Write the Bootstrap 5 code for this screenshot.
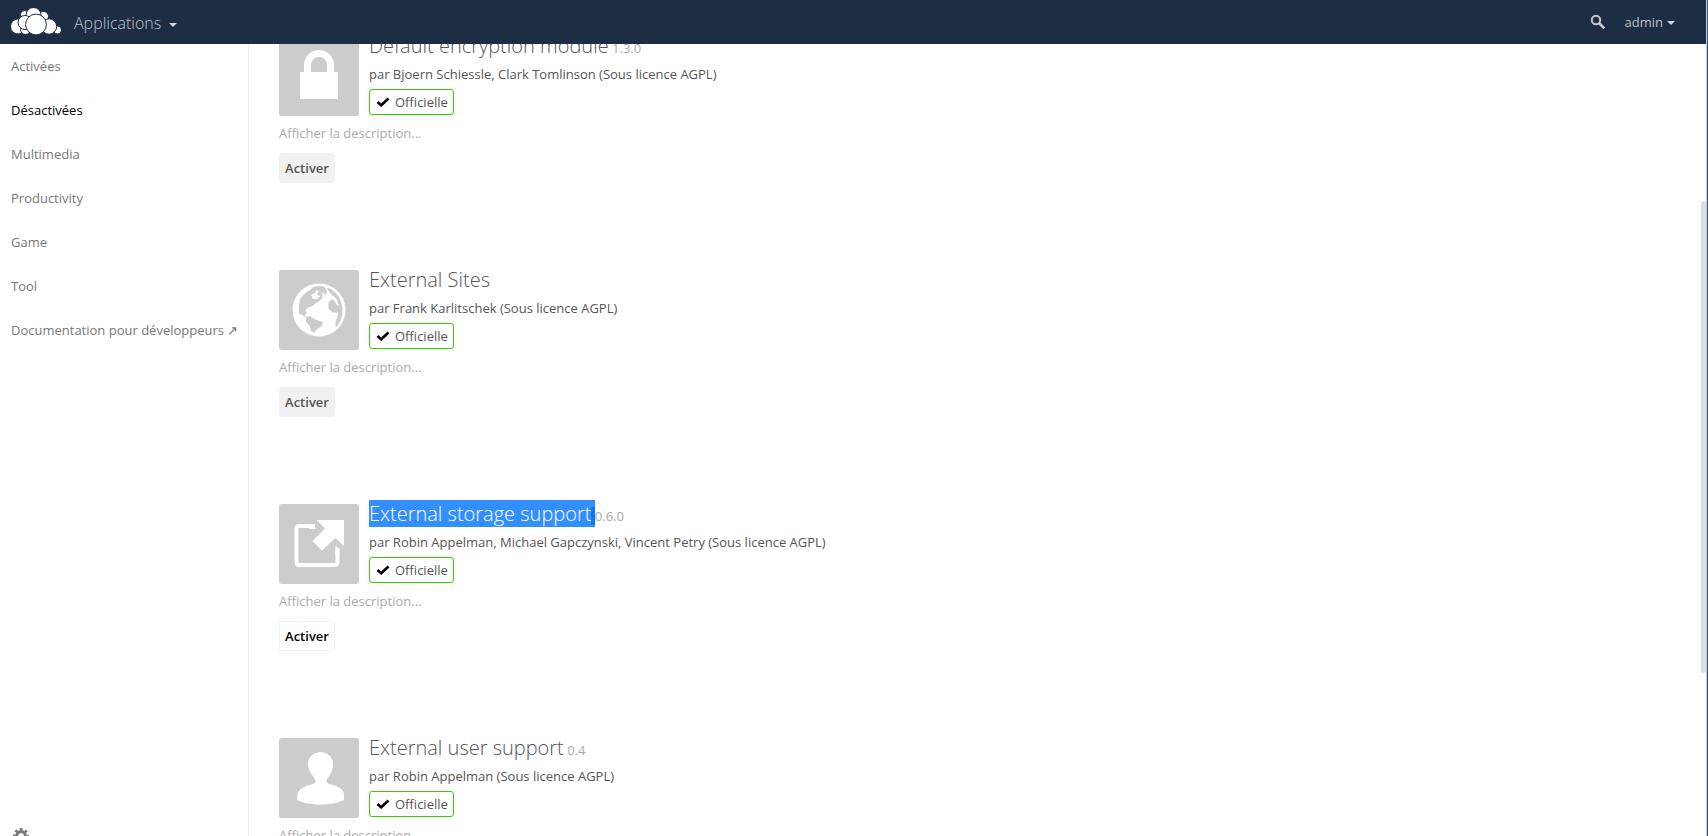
<!DOCTYPE html>
<html lang="fr">
<head>
<meta charset="utf-8">
<meta name="viewport" content="width=device-width, initial-scale=1">
<title>Applications - ownCloud</title>
<link href="https://cdn.jsdelivr.net/npm/bootstrap@5.3.0/dist/css/bootstrap.min.css" rel="stylesheet">
<style>
body { font-family: "Open Sans", sans-serif; font-size: 13px; line-height: 20px; color: #555; background: #fff; }
a { text-decoration: none; }
.topbar { height: 44px; background: #1d2d44; z-index: 10; padding: 0 33px 0 11px; }
.topbar .btn { border: 0; padding: 0; color: #bbc0c7; line-height: 20px; }
.topbar .app-menu { font-size: 16px; font-weight: 300; margin: 2px 0 0 13px; }
.topbar .user-menu { font-size: 13px; }
.topbar .dropdown-toggle::after { border-width: 4px 4px 0; margin-left: 4px; vertical-align: 2px; color: #d2d5da; }
.topbar .app-menu::after { margin-left: 8px; }
.sidebar { width: 249px; border-right: 1px solid #eee; }
.sidebar .nav-link { padding: 11px; height: 44px; line-height: 22px; color: #777; white-space: nowrap; }
.sidebar .nav-link.active { color: #000; }
.settings-btn { padding: 0 0 0 13px; margin-bottom: -8px; line-height: 1; }
.app-list { margin-top: -12px; padding-left: 30px; }
.app-entry { height: 234px; }
.app-head { gap: 10px; }
.app-icon { width: 80px; height: 80px; background: #ccc; border-radius: 3px; margin-top: 4px; }
.app-title { height: 27px; line-height: 27px; white-space: nowrap; }
.app-name { font-size: 20px; line-height: 27px; font-weight: 300; color: #555; margin: 0; }
.app-version { color: #aaa; }
.app-name.picked { background: #338fff; color: #fff; }
.picked-gap { font-size: 13px; font-weight: 400; background: #0a78ff; }
.author { margin: 5px 0; }
.official { height: 26px; width: 85px; border: 1px solid #37ce02; border-radius: 3px; padding-left: 6px; gap: 5px; }
.more { display: block; width: max-content; color: #aaa; margin: 7px 0 10px; }
.enable-btn { height: 30px; width: 56px; padding: 0; font-size: 13px; line-height: 20px; font-weight: 600; color: #555; background: #f1f1f1; border: 1px solid #f1f1f1; border-radius: 3px; }
.enable-btn.hovered { background: #fff; color: #000; }
.scroll-thumb { right: 2px; top: 24%; height: 56.5%; width: 5px; background: #ddd; border-radius: 2px; }
.edge { right: 0; width: 2px; background: #31558e; border-left: 1px solid #c8ccd2; z-index: 20; }
</style>
</head>
<body>
<svg class="d-none">
  <symbol id="check" viewBox="0 0 14 10"><path d="M1.500 5l3.700 3.300L12.500 1.500" fill="none" stroke="#000" stroke-width="2.600"/></symbol>
</svg>
<div class="vh-100 d-flex flex-column overflow-hidden position-relative">
  <header class="topbar d-flex align-items-center flex-shrink-0">
    <a href="#" aria-label="ownCloud" class="d-flex">
      <svg width="50" height="28" viewBox="0 0 50 28" fill="#fff" stroke="#1d2d44" stroke-width="1">
        <circle cx="13.500" cy="6.500" r="4"/><circle cx="32.500" cy="8.500" r="5"/>
        <circle cx="46.500" cy="22" r="4"/><circle cx="7" cy="18.500" r="7.500"/><circle cx="14.500" cy="21.500" r="5"/>
        <circle cx="22.500" cy="7" r="7.500"/><circle cx="14" cy="14.500" r="7"/>
        <circle cx="38" cy="18.500" r="7.700"/><circle cx="25" cy="16.500" r="10.400"/>
      </svg>
    </a>
    <button type="button" class="btn app-menu dropdown-toggle">Applications</button>
    <div class="ms-auto d-flex align-items-center">
      <button type="button" class="btn d-flex me-3 pe-1" aria-label="Rechercher">
        <svg width="16" height="16" viewBox="0 0 16 16" fill="none" stroke="#c5c9cf"><circle cx="7" cy="6" r="4.200" stroke-width="2"/><path d="M10 9l5.300 5.300" stroke-width="2.600"/></svg>
      </button>
      <button type="button" class="btn user-menu dropdown-toggle">admin</button>
    </div>
  </header>
  <div class="d-flex flex-grow-1 overflow-hidden">
    <aside class="sidebar d-flex flex-column flex-shrink-0">
      <nav class="nav flex-column flex-nowrap">
        <a class="nav-link" href="#">Activées</a>
        <a class="nav-link active" href="#">Désactivées</a>
        <a class="nav-link" href="#">Multimedia</a>
        <a class="nav-link" href="#">Productivity</a>
        <a class="nav-link" href="#">Game</a>
        <a class="nav-link" href="#">Tool</a>
        <a class="nav-link" href="#">Documentation pour développeurs ↗</a>
      </nav>
      <button type="button" class="btn border-0 settings-btn mt-auto text-start" aria-label="Paramètres">
        <svg class="d-block" width="16" height="16" viewBox="0 0 16 16"><circle cx="8" cy="8" r="4.400" fill="none" stroke="#777" stroke-width="3"/><circle cx="8" cy="8" r="6.800" fill="none" stroke="#777" stroke-width="2.400" stroke-dasharray="2.670 2.670" stroke-dashoffset="1.330"/></svg>
      </button>
    </aside>
    <main class="flex-grow-1 overflow-hidden">
      <div class="app-list">
        <article class="app-entry">
          <div class="app-head d-flex">
            <div class="app-icon flex-shrink-0"><svg width="80" height="80" viewBox="0 0 80 80"><path d="M21 36h38v27H21z" fill="#fff"/><path d="M28.500 37v-8a11.500 11.500 0 0 1 23 0v8" fill="none" stroke="#fff" stroke-width="7"/></svg></div>
            <div>
              <div class="app-title"><h2 class="app-name d-inline">Default encryption module</h2> <span class="app-version">1.3.0</span></div>
              <div class="author">par Bjoern Schiessle, Clark Tomlinson (Sous licence AGPL)</div>
              <div class="official d-flex align-items-center"><svg width="14" height="10"><use href="#check"/></svg>Officielle</div>
            </div>
          </div>
          <a href="#" class="more">Afficher la description...</a>
          <button type="button" class="btn enable-btn">Activer</button>
        </article>
        <article class="app-entry">
          <div class="app-head d-flex">
            <div class="app-icon flex-shrink-0"><svg width="80" height="80" viewBox="0 0 80 80"><circle cx="40" cy="40" r="26.500" fill="#fff"/><g fill="#ccc"><path d="M21 29c3-4 6-7 11-9.500l1-2c4-1.500 8-2 12-1l3 4-1 5-3 0-1 3-3 3-4 2-3 3-4 1-3 3 2 2-2 2 1 3-3-2-4-2c0-5 0-9 1-14.500z"/><path d="M27 47l4-1 5 3.500 8 2.500-1 4-4 2.500-4 4-3-1-1-5-4-5z"/><path d="M48 17.500c6 2 10.500 6 12.500 11 3 6 4 12 2 19-1 4-3 8-6 10l0-6 2-5 1-4-6 0-4-4 0-6 3-3 3 0-3-5-4-5z"/></g><path d="M32 25l4-2 1-3 3 1-2 4 4 1-4 3-4 0zM43 22l4 3-1 2-3-1zM54 25l4 5 2 6-2-1-4-6z" fill="#fff"/></svg></div>
            <div>
              <div class="app-title"><h2 class="app-name d-inline">External Sites</h2></div>
              <div class="author">par Frank Karlitschek (Sous licence AGPL)</div>
              <div class="official d-flex align-items-center"><svg width="14" height="10"><use href="#check"/></svg>Officielle</div>
            </div>
          </div>
          <a href="#" class="more">Afficher la description...</a>
          <button type="button" class="btn enable-btn">Activer</button>
        </article>
        <article class="app-entry">
          <div class="app-head d-flex">
            <div class="app-icon flex-shrink-0"><svg width="80" height="80" viewBox="0 0 80 80"><path d="M36 22H20.500Q17.500 22 17.500 25v33q0 3 3 3h35q3 0 3-3V44" fill="none" stroke="#fff" stroke-width="4"/><path d="M32 20l5.500 5H30zM56.500 41.500l4 4v5h-4z" fill="#fff"/><path d="M37.500 16H65v26l-8.500-8L43 46.500 33.500 37 46 24.500z" fill="#fff"/></svg></div>
            <div>
              <div class="app-title"><h2 class="app-name d-inline picked">External storage support<span class="picked-gap"> </span></h2><span class="app-version">0.6.0</span></div>
              <div class="author">par Robin Appelman, Michael Gapczynski, Vincent Petry (Sous licence AGPL)</div>
              <div class="official d-flex align-items-center"><svg width="14" height="10"><use href="#check"/></svg>Officielle</div>
            </div>
          </div>
          <a href="#" class="more">Afficher la description...</a>
          <button type="button" class="btn enable-btn hovered">Activer</button>
        </article>
        <article class="app-entry">
          <div class="app-head d-flex">
            <div class="app-icon flex-shrink-0"><svg width="80" height="80" viewBox="0 0 80 80"><path d="M41.500 14c7 0 12.500 5 12.500 12 0 6-2 10-5 13.500-2 2.500-2 5 0 6 8 2 16 5 16 11V62c-6 3-15 4.500-23.500 4.500S24 65 18 62c0-4 0-6 2-9 3-4 9-6 14-7 3-1 3-4 1-6.500-3-4-6-7.500-6-13.500 0-7 5.500-12 12.500-12z" fill="#fff"/></svg></div>
            <div>
              <div class="app-title"><h2 class="app-name d-inline">External user support</h2> <span class="app-version">0.4</span></div>
              <div class="author">par Robin Appelman (Sous licence AGPL)</div>
              <div class="official d-flex align-items-center"><svg width="14" height="10"><use href="#check"/></svg>Officielle</div>
            </div>
          </div>
          <a href="#" class="more">Afficher la description...</a>
          <button type="button" class="btn enable-btn">Activer</button>
        </article>
      </div>
    </main>
  </div>
  <div class="scroll-thumb position-absolute"></div>
  <div class="edge position-absolute top-0 bottom-0"></div>
</div>
<script src="https://cdn.jsdelivr.net/npm/bootstrap@5.3.0/dist/js/bootstrap.bundle.min.js"></script>
</body>
</html>
